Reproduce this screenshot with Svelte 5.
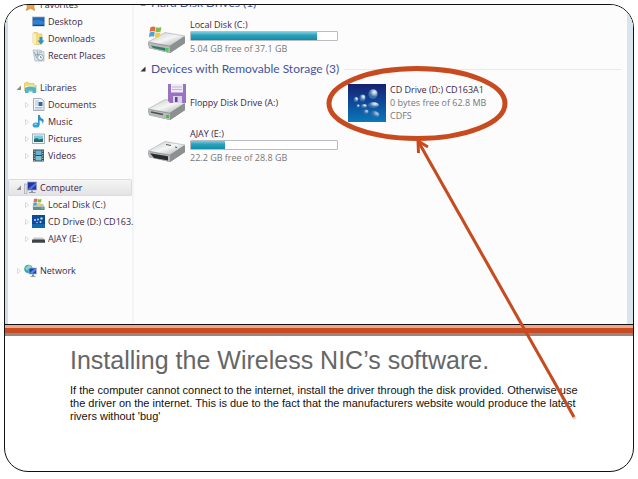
<script lang="ts">
  type Entry = { name: string; icon: string };
  type Group = Entry & { arrow: string; selected?: boolean; children: Entry[]; childArrows?: boolean };

  const groups: Group[] = [
    {
      name: "Favorites",
      icon: "star",
      arrow: "open",
      children: [
        { name: "Desktop", icon: "desktop" },
        { name: "Downloads", icon: "downloads" },
        { name: "Recent Places", icon: "recent" },
      ],
    },
    {
      name: "Libraries",
      icon: "libraries",
      arrow: "open",
      childArrows: true,
      children: [
        { name: "Documents", icon: "document" },
        { name: "Music", icon: "music" },
        { name: "Pictures", icon: "picture" },
        { name: "Videos", icon: "video" },
      ],
    },
    {
      name: "Computer",
      icon: "computer",
      arrow: "open",
      selected: true,
      childArrows: true,
      children: [
        { name: "Local Disk (C:)", icon: "disk" },
        { name: "CD Drive (D:) CD163.", icon: "cd" },
        { name: "AJAY (E:)", icon: "drive" },
      ],
    },
    { name: "Network", icon: "network", arrow: "closed", children: [] },
  ];

  const localDisk = { name: "Local Disk (C:)", used: 86, free: "5.04 GB free of 37.1 GB" };
  const ajay = { name: "AJAY (E:)", used: 23, free: "22.2 GB free of 28.8 GB" };
</script>

{#snippet arrow(kind: string)}
  <svg class="arrow" viewBox="0 0 6 6" aria-hidden="true">
    {#if kind === "open"}
      <path d="M5 .5V5H.5z" fill="#8b8b8f" />
    {:else if kind === "dark"}
      <path d="M5.5 .5V5.5H.5z" fill="#333" />
    {:else if kind === "closed"}
      <path d="M1.5 .5L4.5 3L1.5 5.5z" fill="#fff" stroke="#d2d2d6" stroke-width=".8" />
    {/if}
  </svg>
{/snippet}

{#snippet flag()}
  <path d="M1 2Q3 .6 5 1.6L4.500 5Q2.500 4.200 .5 5.400z" fill="#e8693a" />
  <path d="M5.500 1.800Q7.500 2.600 9.500 1.500L9 5Q7 6 5 5.100z" fill="#7fbd4c" />
  <path d="M.4 6Q2.400 4.800 4.400 5.600L3.900 9Q2 8.200 0 9.400z" fill="#4d9fd8" />
  <path d="M4.900 5.800Q7 6.600 8.900 5.600L8.400 9Q6.500 10 4.400 9.200z" fill="#f6cb45" />
{/snippet}

{#snippet smallIcon(name: string)}
  <svg class="icon" viewBox="0 0 13 13" aria-hidden="true">
    {#if name === "star"}
      <path d="M6.500 0L8.400 4.300L13 4.800L9.600 8L10.600 12.500L6.500 10.200L2.400 12.500L3.400 8L0 4.800L4.600 4.300z" fill="#f0a23a" stroke="#c97820" stroke-width=".6" />
    {:else if name === "desktop"}
      <rect x=".5" y="2" width="12" height="9" fill="#2c63b4" stroke="#8fa9c9" stroke-width=".7" />
      <path d="M1 6Q6 3 12 7V10H1z" fill="#2d83cf" />
      <path d="M1 10.300H12" stroke="#17366b" stroke-width="1" />
    {:else if name === "downloads"}
      <path d="M1 1L5 0L6 2H10V12L3 13L1 11z" fill="#f1dc83" stroke="#d3b24f" stroke-width=".5" />
      <path d="M1 1L4 2.500V13L1 11.500z" fill="#f9efb4" />
      <path d="M7.500 5H10.500V8.500H12.500L9 12.500L5.500 8.500H7.500z" fill="#3292c4" />
    {:else if name === "recent"}
      <path d="M1 1H8L12 3V12H3z" fill="#dce6ea" stroke="#9aabb4" stroke-width=".6" />
      <path d="M2 3L5 9M5 2L6 7M3 6L8 5M7 3H10" stroke="#8297a5" stroke-width=".8" fill="none" />
      <circle cx="8.500" cy="8.500" r="3" fill="#eef5f8" stroke="#7a93a3" stroke-width=".8" />
      <path d="M8.500 7V8.700H10" stroke="#527084" stroke-width=".7" fill="none" />
    {:else if name === "libraries"}
      <path d="M.5 2L4 1L5 2.500H10V10H.5z" fill="#f3d878" stroke="#ccb04f" stroke-width=".5" />
      <path d="M4 4H12.500V11H4z" fill="#a6d9a0" />
      <path d="M1 7Q5 4.500 12 7V12H8.500V9.500H4.500V12H1z" fill="#50b3d5" />
      <path d="M1 6Q5 4 11 5" stroke="#fff4be" stroke-width="1" fill="none" />
    {:else if name === "document"}
      <path d="M1.500 .5H9L12 3V12.500H1.500z" fill="#f4f7fa" stroke="#8d9aaa" stroke-width=".8" />
      <path d="M3 3H7M3 5H6M3 7H6M3 9.500H10.500M3 11H10.500" stroke="#8ca2be" stroke-width=".7" />
      <rect x="6.500" y="4" width="4" height="4" fill="#38659b" />
    {:else if name === "music"}
      <ellipse cx="4" cy="10" rx="3.400" ry="2.600" fill="#2ea1d7" />
      <path d="M6 10V0H7.700Q8 3 11 4Q12.500 6 10.500 9Q11 6 7.600 5.200V10z" fill="#2b8fc8" />
      <ellipse cx="3.500" cy="9.300" rx="1.500" ry=".8" fill="#98daf3" />
    {:else if name === "picture"}
      <rect x=".5" y="2" width="12" height="9.500" fill="#eef5f6" stroke="#8ea0a8" stroke-width=".8" />
      <rect x="2" y="3.500" width="9" height="6.500" fill="#7bc8dd" />
      <path d="M2 7L5 6L7 7.500L11 6.500V10H2z" fill="#236e70" />
    {:else if name === "video"}
      <rect x="1" y=".5" width="11" height="12" fill="#344954" />
      <rect x="3.500" y="1.500" width="6" height="4.500" fill="#64b4d1" />
      <rect x="3.500" y="7" width="6" height="4.500" fill="#7ac0d6" />
      <path d="M2.200 1.500V12M10.800 1.500V12" stroke="#d8e3e6" stroke-width="1" stroke-dasharray="1.200 1.200" />
    {:else if name === "computer"}
      <rect x=".5" y="3" width="2.500" height="9.500" fill="#dfe3e6" stroke="#899096" stroke-width=".5" />
      <rect x="3.500" y="1" width="9" height="8" fill="#2433a4" stroke="#9aa8c8" stroke-width=".7" />
      <path d="M4 8L12 1.500V4L7 8.500z" fill="#5275d7" />
      <path d="M7 9.500H9V11H11.500V12H5V11H7z" fill="#8d98a3" />
    {:else if name === "disk"}
      <path d="M.5 8L3 6H11L12.500 8.500V11.500H1z" fill="#b9c3c4" />
      <path d="M1 9H12.500V12H1z" fill="#5b8f92" />
      <path d="M9 10H11.500" stroke="#74e05f" stroke-width="1" />
      <g transform="translate(1 -.5) scale(.9)">{@render flag()}</g>
    {:else if name === "cd"}
      <rect width="13" height="13" fill="#0d4a9c" />
      <path d="M0 9H13V13H0z" fill="#1268ad" />
      <g fill="#bfd8ef">
        <circle cx="3" cy="5" r="1" />
        <circle cx="6" cy="4.500" r="1" />
        <circle cx="9.500" cy="3.500" r="1.200" />
        <circle cx="5" cy="7.500" r=".8" />
        <circle cx="8.500" cy="7" r="1" />
      </g>
    {:else if name === "drive"}
      <path d="M2 5.500H11L13 8H0z" fill="#c9cbcd" />
      <rect y="7.500" width="13" height="3.500" rx=".8" fill="#3e4246" />
      <path d="M1 10.500H12" stroke="#85898c" stroke-width=".7" />
    {:else if name === "network"}
      <circle cx="4.500" cy="5" r="4.300" fill="#35a2a8" />
      <path d="M1 4Q4 2 5 .8Q8 2 7 4Q4 4 3 7z" fill="#8bd7be" />
      <rect x="5" y="4" width="7.500" height="6" fill="#1b45b0" stroke="#b3c1d8" stroke-width=".7" />
      <path d="M5.500 9L11 4.500H12V6L8.500 9.500z" fill="#5a8ce4" />
      <path d="M8 10.500H10V12H11.500V12.800H6.500V12H8z" fill="#708195" />
    {/if}
  </svg>
{/snippet}

{#snippet driveIcon(kind: string)}
  <svg class="drive-icon" viewBox="0 0 38 38" aria-hidden="true">
    {#if kind === "cd"}
      <defs>
        <linearGradient id="cd-back" x1="0" y1="0" x2="0" y2="1">
          <stop offset="0" stop-color="#17206f" />
          <stop offset=".5" stop-color="#0c4b9a" />
          <stop offset="1" stop-color="#0b79b8" />
        </linearGradient>
        <radialGradient id="ball" cx=".65" cy=".3">
          <stop offset="0" stop-color="#f4f8fc" />
          <stop offset=".5" stop-color="#a3bbd8" />
          <stop offset="1" stop-color="#416da5" />
        </radialGradient>
      </defs>
      <rect width="38" height="38" fill="url(#cd-back)" />
      <g fill="url(#ball)">
        <ellipse cx="8" cy="15.500" rx="2.300" ry="2.600" />
        <ellipse cx="14.500" cy="14" rx="3" ry="3.400" />
        <ellipse cx="25" cy="10" rx="4.600" ry="4.800" />
        <circle cx="10" cy="22" r="1.700" />
        <ellipse cx="16" cy="22" rx="3" ry="2" />
        <ellipse cx="25.500" cy="21" rx="5.500" ry="3" />
        <ellipse cx="18" cy="28" rx="2.600" ry="2.400" opacity=".8" />
        <ellipse cx="27" cy="30" rx="4.500" ry="3" opacity=".7" transform="rotate(25 27 30)" />
      </g>
    {:else}
      <defs>
        <linearGradient id="metal-{kind}" x1="0" y1="0" x2="1" y2="1">
          <stop offset="0" stop-color="#c5c8c8" />
          <stop offset=".5" stop-color="#f4f5f5" />
          <stop offset="1" stop-color="#a2a5a6" />
        </linearGradient>
      </defs>
      <path d="M0 26L18 16L37 20V26L22 36L1 31z" fill="#77797b" />
      <path d="M0 25L17 15.500L37 19L22 29z" fill="url(#metal-{kind})" stroke="#999d9e" stroke-width=".5" />
      <path d="M22 29L37 19.500V26L22 36z" fill="#8d9091" />
      <path d="M0 25.500L22 29.500V36L1.500 31.500z" fill="#b7babb" />
      {#if kind === "usb"}
        <path d="M2 27.300L20 30.300V34.500L6 32z" fill="#292b2c" />
        <path d="M18 18.500L23 19.500M27 21L29 21.500" stroke="#555" stroke-width="1" />
      {:else if kind === "floppy"}
        <path d="M3 28L15 30.500" stroke="#4d5051" stroke-width="1.500" />
        <rect x="18" y="31" width="3" height="3" fill="#45bd43" />
        <path d="M20 0H38V19H22L20 17z" fill="#9a72c2" />
        <rect x="23" y="0" width="12" height="8.500" fill="#eeeaf7" />
        <path d="M24 3H34M24 5.500H34" stroke="#b5a6cf" stroke-width=".8" />
        <rect x="25" y="12" width="9" height="7" fill="#d9d3e5" />
        <rect x="27" y="13" width="2.500" height="5" fill="#62468a" />
      {:else}
        <path d="M3 28.500L20 31.500V34.500L5 31z" fill="#37776e" />
        <rect x="17" y="31" width="3.500" height="3" fill="#46d05a" />
        <g transform="translate(1 8) scale(1.300)">{@render flag()}</g>
      {/if}
    {/if}
  </svg>
{/snippet}

{#snippet volume(disk: any)}
  <div class="info">
    <p class="name">{disk.name}</p>
    <div class="bar" role="img" aria-label={disk.free}>
      <div class="fill" style="width: {disk.used}%"></div>
    </div>
    <p class="meta">{disk.free}</p>
  </div>
{/snippet}

<main class="slide">
  <section class="explorer">
    <nav>
      {#each groups as group (group.name)}
        <ul>
          <li>
            <button class="item" class:selected={group.selected}>
              {@render arrow(group.arrow)}
              {@render smallIcon(group.icon)}
              <span>{group.name}</span>
            </button>
          </li>
          {#each group.children as child (child.name)}
            <li>
              <button class="item child">
                {@render arrow(group.childArrows ? "closed" : "none")}
                {@render smallIcon(child.icon)}
                <span>{child.name}</span>
              </button>
            </li>
          {/each}
        </ul>
      {/each}
    </nav>

    <div class="content">
      <h2>{@render arrow("dark")}<span>Hard Disk Drives (1)</span></h2>
      <div class="drives">
        <div class="drive">
          {@render driveIcon("disk")}
          {@render volume(localDisk)}
        </div>
      </div>
      <h2 class="ruled">{@render arrow("dark")}<span>Devices with Removable Storage (3)</span></h2>
      <div class="drives">
        <div class="drive">
          {@render driveIcon("floppy")}
          <p class="name">Floppy Disk Drive (A:)</p>
        </div>
        <div class="drive">
          {@render driveIcon("cd")}
          <div class="info">
            <p class="name">CD Drive (D:) CD163A1</p>
            <p class="meta">0 bytes free of 62.8 MB</p>
            <p class="meta">CDFS</p>
          </div>
        </div>
        <div class="drive">
          {@render driveIcon("usb")}
          {@render volume(ajay)}
        </div>
      </div>
    </div>
  </section>

  <div class="stripe"></div>

  <section class="caption">
    <h1>Installing the Wireless NIC’s software.</h1>
    <p>
      If the computer cannot connect to the internet, install the driver through the disk provided. Otherwise use<br />
      the driver on the internet. This is due to the fact that the manufacturers website would produce the latest<br />
      rivers without 'bug'
    </p>
  </section>

  <!-- ring round the CD drive, with the arrow that points at it -->
  <svg class="callout" width="600" height="440" viewBox="5 5 600 440" aria-hidden="true">
    <path d="M419 143L575 419" fill="none" stroke="#9a8074" stroke-opacity=".35" stroke-width="3" />
    <g fill="none" stroke="#c84b20">
      <ellipse cx="417" cy="103.500" rx="88" ry="35" stroke-width="5" />
      <path d="M418 141L574 417" stroke-width="3" />
      <path d="M418.500 153L418 141L428 147" stroke-width="3" />
    </g>
  </svg>
</main>

<style>
  :global(body) {
    margin: 0;
    background: #fff;
  }
  p,
  h1,
  h2,
  ul {
    margin: 0;
    padding: 0;
    font-weight: normal;
  }
  .slide {
    position: relative;
    margin: 4px 4px 6px;
    border: 1px solid #111;
    border-radius: 24px;
    overflow: hidden;
    background: #fff;
    font-family: "Liberation Sans", Arial, sans-serif;
  }
  .explorer {
    display: flex;
    border-left: 3px solid #cfdcec;
    border-right: 6px solid #d9e4ec;
    background: #fcfcfc;
    font-family: "Open Sans", "Noto Sans", sans-serif;
    font-size: 9px;
    line-height: 13px;
    color: #3b2747;
  }
  nav {
    display: flex;
    flex-direction: column;
    gap: 15px;
    flex: none;
    width: 124px;
    margin-top: -9px;
    padding-bottom: 45px;
    border-right: 2px solid #f3f4f6;
  }
  ul {
    list-style: none;
  }
  .item {
    display: flex;
    align-items: center;
    gap: 2px;
    width: 100%;
    height: 17px;
    padding: 0 0 0 8px;
    border: 0;
    background: none;
    font: inherit;
    color: inherit;
    white-space: nowrap;
  }
  .item.child {
    padding-left: 16px;
  }
  .item span {
    margin-left: 1px;
  }
  .item.selected {
    background: linear-gradient(#f6f6f7, #e2e2e4);
    box-shadow: inset 0 0 0 1px #dcdce0;
    border-radius: 2px;
  }
  .arrow {
    flex: none;
    width: 6px;
    height: 6px;
  }
  .icon {
    flex: none;
    width: 13px;
    height: 13px;
  }
  .content {
    flex: 1;
    margin-top: -11px;
    padding: 0 6px;
  }
  h2 {
    display: flex;
    align-items: center;
    gap: 5px;
    height: 18px;
    margin-bottom: 5px;
    font-family: Lato, "Open Sans", sans-serif;
    font-size: 12px;
    line-height: 18px;
    color: #44549a;
    white-space: nowrap;
  }
  .ruled {
    margin-top: 5px;
  }
  .ruled::after {
    content: "";
    flex: 1;
    height: 1px;
    background: #e9e9ec;
  }
  .drives {
    display: grid;
    grid-template-columns: 200px 200px;
    gap: 4px 0;
    padding-left: 8px;
  }
  .drive {
    display: flex;
    align-items: center;
    gap: 4px;
  }
  .drive-icon {
    flex: none;
    width: 38px;
    height: 38px;
  }
  .name,
  .meta {
    white-space: nowrap;
  }
  .meta {
    color: #77777b;
  }
  .bar {
    width: 148px;
    height: 10px;
    margin-bottom: 1px;
    border: 1px solid #b9bcc0;
    border-radius: 1px;
    box-sizing: border-box;
    background: #fff;
  }
  .fill {
    height: 100%;
    background: linear-gradient(#7ccbdb, #2ba3bd 40%, #148ba8);
  }
  .stripe {
    height: 5px;
    margin-top: 1px;
    border-top: 3px solid #eca994;
    border-bottom: 3px solid #998681;
    box-shadow: 0 -1px #111;
    background: #cb4b20;
  }
  .caption {
    padding: 9px 55px 48px 65px;
    color: #111;
  }
  h1 {
    font-size: 25px;
    line-height: 30px;
    color: #666;
    white-space: nowrap;
  }
  .caption p {
    margin-top: 9px;
    font-size: 11px;
    line-height: 13px;
    white-space: nowrap;
  }
  .callout {
    position: absolute;
    top: 0;
    left: 0;
  }
</style>
